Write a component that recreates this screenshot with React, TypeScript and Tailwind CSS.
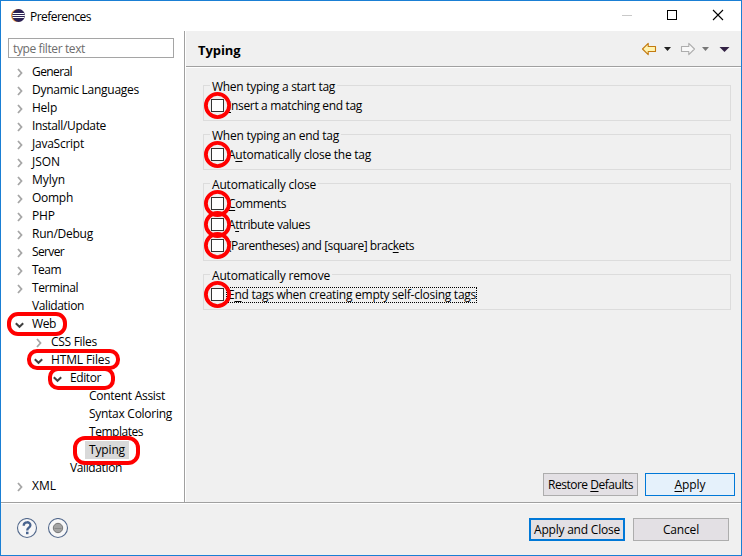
import { useLayoutEffect, useRef, useState, type ReactNode } from "react";

/** Label whose letter spacing is adjusted so that it fills the given width. */
function Label({ w, className = "", children }: { w: number; className?: string; children: ReactNode }) {
  const ref = useRef<HTMLSpanElement>(null);
  const [spacing, setSpacing] = useState(0);
  useLayoutEffect(() => {
    const el = ref.current;
    if (!el) return;
    const count = (el.textContent ?? "").length;
    setSpacing((w - el.getBoundingClientRect().width) / count);
  }, [w]);
  return (
    <span ref={ref} className={`inline-block shrink-0 whitespace-pre ${className}`} style={{ letterSpacing: spacing }}>
      {children}
    </span>
  );
}

function Mnemonic({ children }: { children: string }) {
  return <span className="underline decoration-1 underline-offset-2">{children}</span>;
}

type Node = { label: string; w: number; level: number; state?: "open" | "closed"; selected?: boolean };

const nodes: Node[] = [
  { label: "General", w: 40, level: 0, state: "closed" },
  { label: "Dynamic Languages", w: 107, level: 0, state: "closed" },
  { label: "Help", w: 25, level: 0, state: "closed" },
  { label: "Install/Update", w: 74, level: 0, state: "closed" },
  { label: "JavaScript", w: 52, level: 0, state: "closed" },
  { label: "JSON", w: 28, level: 0, state: "closed" },
  { label: "Mylyn", w: 33, level: 0, state: "closed" },
  { label: "Oomph", w: 41, level: 0, state: "closed" },
  { label: "PHP", w: 23, level: 0, state: "closed" },
  { label: "Run/Debug", w: 61, level: 0, state: "closed" },
  { label: "Server", w: 32, level: 0, state: "closed" },
  { label: "Team", w: 29, level: 0, state: "closed" },
  { label: "Terminal", w: 46, level: 0, state: "closed" },
  { label: "Validation", w: 52, level: 0 },
  { label: "Web", w: 24, level: 0, state: "open" },
  { label: "CSS Files", w: 46, level: 1, state: "closed" },
  { label: "HTML Files", w: 59, level: 1, state: "open" },
  { label: "Editor", w: 31, level: 2, state: "open" },
  { label: "Content Assist", w: 76, level: 3 },
  { label: "Syntax Coloring", w: 83, level: 3 },
  { label: "Templates", w: 54, level: 3 },
  { label: "Typing", w: 36, level: 3, selected: true },
  { label: "Validation", w: 52, level: 2 },
  { label: "XML", w: 24, level: 0, state: "closed" },
];

const indents = ["pl-[13px]", "pl-[32px]", "pl-[51px]", "pl-[70px]"];

function TreeRow({ node }: { node: Node }) {
  return (
    <div className={`flex h-[18px] items-center ${indents[node.level]}`}>
      <svg width="14" height="18" viewBox="0 0 14 18" fill="none" className="shrink-0">
        {node.state === "closed" && <path d="M4 6 L7.5 10 L4 14" stroke="#a6a6a6" strokeWidth="1.8" />}
        {node.state === "open" && <path d="M1.8 8.2 L5.5 11.8 L9.2 8.2" stroke="#404040" strokeWidth="2" />}
      </svg>
      <div className={`flex h-[18px] items-center px-1 leading-[18px] ${node.selected ? "bg-[#d9d9d9]" : ""}`}>
        <Label w={node.w}>{node.label}</Label>
      </div>
    </div>
  );
}

function Group({ title, w, className, children }: { title: string; w: number; className: string; children: ReactNode }) {
  return (
    <fieldset className={`relative border border-[#dcdcdc] pl-[7px] ${className}`}>
      <div className="absolute -top-2 left-[6px] bg-[#f0f0f0] px-[2px] leading-[17px]">
        <Label w={w}>{title}</Label>
      </div>
      {children}
    </fieldset>
  );
}

function Check({ w, focused, children }: { w: number; focused?: boolean; children: ReactNode }) {
  return (
    <div className="relative flex h-[21px] items-center">
      <span className="h-[13px] w-[13px] shrink-0 border border-[#333] bg-white" />
      <span
        className={`ml-[2px] flex h-4 items-center border border-dotted pl-px leading-4 ${focused ? "border-black" : "border-transparent"}`}
      >
        <Label w={w}>{children}</Label>
      </span>
      <svg className="absolute top-[-3px] left-[-7px]" width="27" height="27" fill="none">
        <circle cx="13.5" cy="13.5" r="11.6" stroke="#ff0000" strokeWidth="3.8" />
      </svg>
    </div>
  );
}

function Button({ w, className, children }: { w: number; className: string; children: ReactNode }) {
  return (
    <button className={`flex h-[23px] items-center justify-center ${className}`}>
      <Label w={w}>{children}</Label>
    </button>
  );
}

const ring = "absolute border-4 border-[#ff0000]";

export default function App() {
  return (
    <div className="relative flex h-[556px] w-[742px] flex-col overflow-hidden border border-[#1a7fd4] bg-[#f0f0f0] font-['Open_Sans','Noto_Sans',sans-serif] text-[12px] leading-4 text-black">
      <header className="flex h-[30px] shrink-0 items-center bg-white">
        <svg width="14" height="14" viewBox="0 0 14 14" className="ml-[10px]">
          <circle cx="6.3" cy="6.5" r="6.3" fill="#f39436" />
          <circle cx="7.6" cy="6.5" r="6.4" fill="#2c2255" />
          <path d="M1.800 4.500h11.500M1.300 6.500h12.600M1.800 8.500h11.500" stroke="#fff" strokeWidth="1" />
        </svg>
        <Label w={61} className="ml-[5px] pt-px">Preferences</Label>
        <svg width="120" height="30" viewBox="0 0 120 30" fill="none" className="ml-auto" shapeRendering="crispEdges">
          <path d="M1 14.5h10" stroke="#c9c9c9" />
          <rect x="46.5" y="9.5" width="9" height="9" stroke="#000" />
          <path d="M92 9l10 10M102 9l-10 10" stroke="#000" shapeRendering="auto" strokeWidth="1.1" />
        </svg>
      </header>

      <main className="flex h-[471px] shrink-0">
        <aside className="w-[183px] shrink-0 bg-white pt-[7px]">
          <div className="ml-[7px] flex h-5 w-[166px] items-center border border-[#a5a5a5] pl-1 text-[#6d6d6d]">
            <Label w={72} className="pt-px">type filter text</Label>
          </div>
          <div className="pt-[5px]">
            {nodes.map((n, i) => (
              <TreeRow key={i} node={n} />
            ))}
          </div>
        </aside>
        <div className="w-[2px] shrink-0 border-l border-[#a0a0a0] bg-white" />

        <section className="flex flex-1 flex-col">
          <div className="flex h-9 shrink-0 items-center border-b border-[#a0a0a0] pl-3">
            <Label w={42.5} className="pt-[2px] text-[13px] font-bold">Typing</Label>
            <svg width="100" height="24" viewBox="0 0 100 24" className="ml-auto">
              <path d="M1.5 12 L7.200 6.300 V9.500 H14.5 V14.500 H7.200 V17.700 Z" fill="#fff3b0" stroke="#c37a10" strokeWidth="1.1" strokeLinejoin="round" />
              <path d="M23 10h7l-3.5 4z" fill="#222" />
              <path d="M53.500 12 L47.800 6.300 V9.500 H40.500 V14.500 H47.800 V17.700 Z" fill="#f8f8f8" stroke="#adadad" strokeWidth="1.1" strokeLinejoin="round" />
              <path d="M61 10h7l-3.500 4z" fill="#777" />
              <path d="M78.500 10h10l-5 5z" fill="#332244" />
            </svg>
          </div>
          <div className="flex flex-1 flex-col border-t border-white pt-[17px] pr-[10px] pl-[17px]">
            <Group title="When typing a start tag" w={123} className="h-9 pt-[9px]">
              <Check w={134}><Mnemonic>I</Mnemonic>nsert a matching end tag</Check>
            </Group>
            <Group title="When typing an end tag" w={127} className="mt-[13px] h-9 pt-[9px]">
              <Check w={143}>A<Mnemonic>u</Mnemonic>tomatically close the tag</Check>
            </Group>
            <Group title="Automatically close" w={104} className="mt-[13px] h-[78px] pt-[9px]">
              <Check w={58}><Mnemonic>C</Mnemonic>omments</Check>
              <Check w={82}>A<Mnemonic>t</Mnemonic>tribute values</Check>
              <Check w={186}>(Parentheses) and [square] brac<Mnemonic>k</Mnemonic>ets</Check>
            </Group>
            <Group title="Automatically remove" w={118} className="mt-[13px] h-9 pt-[9px]">
              <Check w={248} focused>E<Mnemonic>n</Mnemonic>d tags when creating empty self-closing tags</Check>
            </Group>
            <div className="mt-auto -mr-[4px] mb-[6px] flex justify-end gap-[7px]">
              <Button w={85} className="w-[95px] border border-[#adadad] bg-[#e3e0e4]">Restore <Mnemonic>D</Mnemonic>efaults</Button>
              <Button w={31} className="w-[90px] border border-[#0078d7] bg-[#e5f1fb]"><Mnemonic>A</Mnemonic>pply</Button>
            </div>
          </div>
        </section>
      </main>

      <footer className="flex flex-1 items-start border-t border-[#a0a0a0]">
        <div className="flex w-full items-start border-t border-white pt-[14px] pr-3 pl-[15px]">
          <svg width="54" height="22" viewBox="0 0 54 22" fill="none">
            <circle cx="11" cy="10" r="9.500" fill="#f7f7f8" stroke="#53698c" strokeWidth="1.1" />
            <path d="M7.700 7.700 C7.700 3.100 14.600 3.300 14.400 7.300 C14.300 9.700 11.200 9.800 11.200 12.500" stroke="#49648f" strokeWidth="2.300" />
            <rect x="10" y="13.700" width="2.500" height="2.500" fill="#49648f" />
            <circle cx="42" cy="10" r="9.500" fill="#f7f7f8" stroke="#53698c" strokeWidth="1.1" />
            <circle cx="42" cy="10" r="4.700" fill="#a3a3a3" stroke="#777" />
            <path d="M38.500 10.500h7" stroke="#888" />
          </svg>
          <div className="ml-auto flex gap-2">
            <Button w={86} className="w-24 border-2 border-[#0078d7] bg-[#e3e0e4]">Apply and Close</Button>
            <Button w={36} className="w-24 border border-[#adadad] bg-[#e3e0e4]">Cancel</Button>
          </div>
        </div>
      </footer>

      <div className={`${ring} top-[311px] left-[6px] h-6 w-[60px] rounded-[11px]`} />
      <div className={`${ring} top-[348px] left-[26px] h-[21px] w-[93px] rounded-[10px]`} />
      <div className={`${ring} top-[366px] left-[47px] h-[23px] w-[67px] rounded-[10px]`} />
      <div className={`${ring} top-[435px] left-[72px] h-[29px] w-[67px] rounded-[12px]`} />
    </div>
  );
}
